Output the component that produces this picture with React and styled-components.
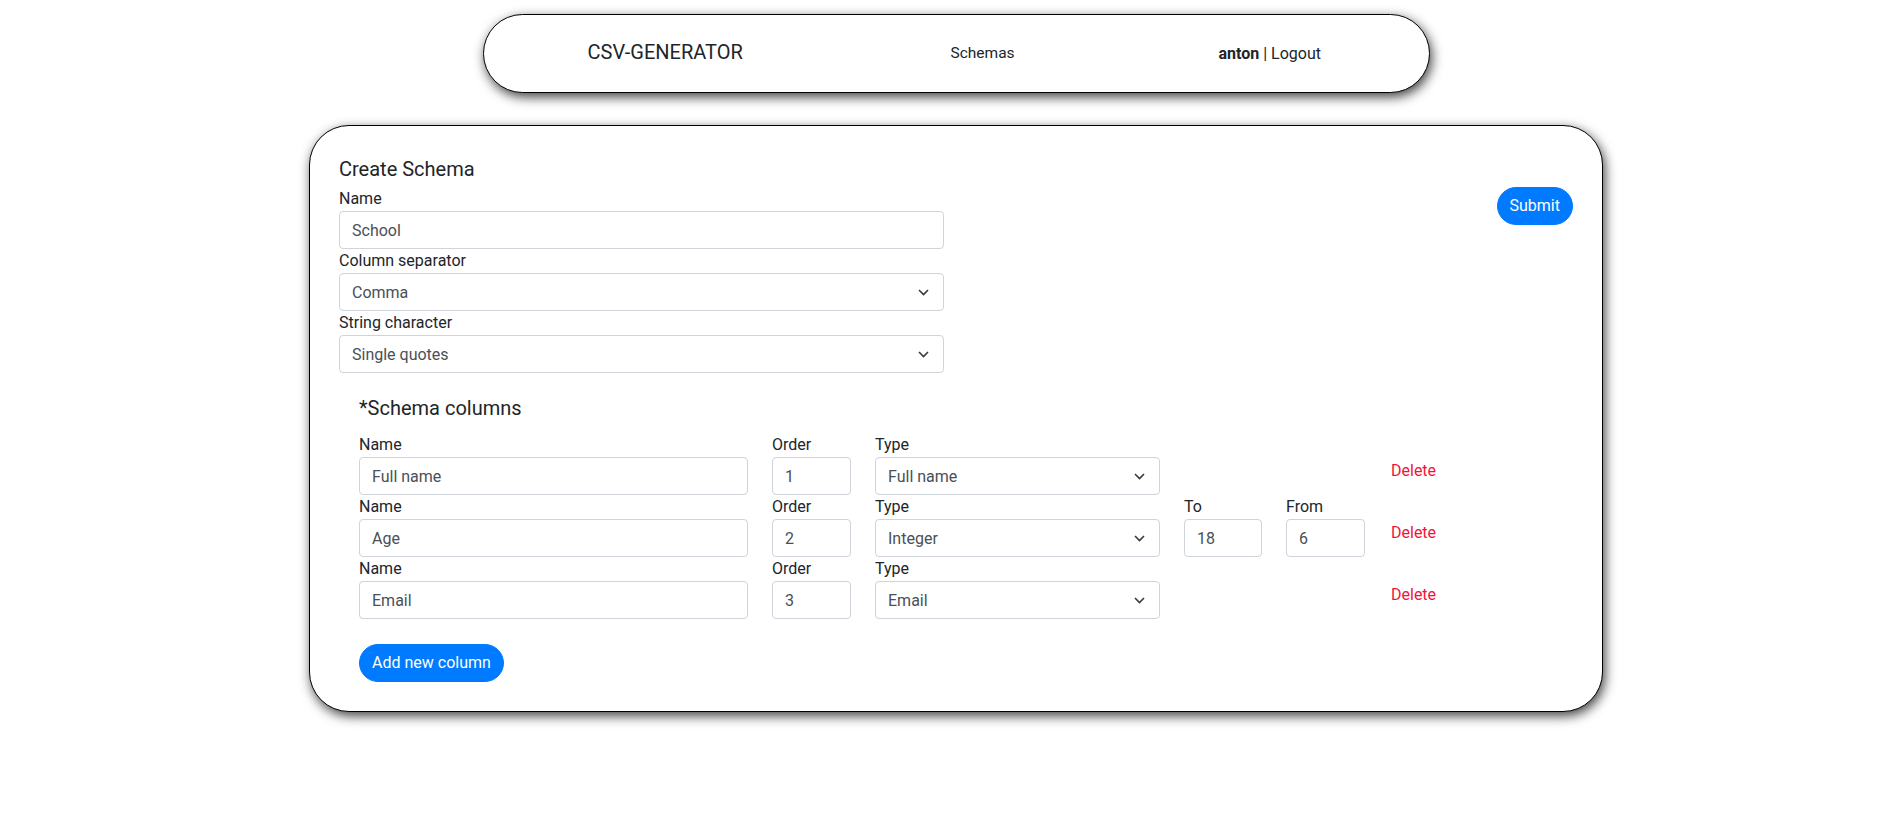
import React, { useState } from "react";
import styled, { createGlobalStyle } from "styled-components";

const GlobalStyle = createGlobalStyle`
  body {
    margin: 0;
    background: #fff;
    color: #212529;
    font-family: "Segoe UI", Roboto, "Liberation Sans", sans-serif;
    font-size: 16px;
    line-height: 1.5;
  }
  * { box-sizing: border-box; }
`;

const Page = styled.div`
  padding: 14px 0 40px 15px;
`;

const Header = styled.header`
  width: 947px;
  height: 79px;
  margin: 0 auto;
  border: 1px solid #000;
  border-radius: 40px;
  box-shadow: 2px 4px 12px rgba(0, 0, 0, 0.75);
  display: grid;
  grid-template-columns: 467px 268px 1fr;
  align-items: center;
  background: #fff;
`;

const Brand = styled.a`
  padding-left: 104px;
  font-size: 20px;
  color: #212529;
  text-decoration: none;
  margin-top: -3px;
`;

const NavLink = styled.a`
  font-size: 15.5px;
  color: #212529;
  text-decoration: none;
`;

const User = styled.div`
  font-size: 16px;
  color: #212529;
  b {
    font-weight: 700;
  }
`;

const Card = styled.main`
  width: 1294px;
  margin: 32px auto 0;
  border: 1px solid #000;
  border-radius: 40px;
  box-shadow: 2px 4px 12px rgba(0, 0, 0, 0.75);
  padding: 30px 29px 29px;
  background: #fff;
`;

const Title = styled.h5`
  margin: 1px 0 6px;
  font-size: 20px;
  font-weight: 400;
  line-height: 1.2;
`;

const TopRow = styled.div`
  display: flex;
  justify-content: space-between;
  align-items: flex-start;
`;

const Fields = styled.div`
  width: 605px;
  display: flex;
  flex-direction: column;
`;

const Label = styled.label`
  display: block;
  font-size: 16px;
  line-height: 24px;
  color: #212529;
`;

const Input = styled.input`
  display: block;
  width: 100%;
  height: 38px;
  padding: 6px 12px;
  font-family: inherit;
  font-size: 16px;
  color: #495057;
  background: #fff;
  border: 1px solid #ced4da;
  border-radius: 4px;
  outline: none;
`;

const SelectWrap = styled.div`
  position: relative;
  width: 100%;
`;

const Select = styled.select`
  display: block;
  width: 100%;
  height: 38px;
  padding: 6px 36px 6px 12px;
  font-family: inherit;
  font-size: 16px;
  color: #495057;
  background: #fff;
  border: 1px solid #ced4da;
  border-radius: 4px;
  appearance: none;
  outline: none;
`;

const Chevron = styled.svg`
  position: absolute;
  right: 15px;
  top: 16px;
  pointer-events: none;
`;

const PillButton = styled.button`
  height: 38px;
  padding: 6px 12px;
  font-family: inherit;
  font-size: 16px;
  line-height: 24px;
  color: #fff;
  background: #007bff;
  border: 1px solid #007bff;
  border-radius: 50rem;
  cursor: pointer;
`;

const ColumnsSection = styled.section`
  padding-left: 20px;
`;

const SectionTitle = styled.h5`
  margin: 23px 0 13px;
  font-size: 20px;
  font-weight: 400;
  line-height: 1.2;
`;

const ColumnRow = styled.div`
  display: grid;
  grid-template-columns: 389px 79px 285px 78px 79px auto;
  column-gap: 24px;
`;

const Cell = styled.div`
  display: flex;
  flex-direction: column;
`;

const DeleteCell = styled.div`
  grid-column: 6;
  display: flex;
  align-items: center;
  padding: 13px 0 0 2px;
`;

const DeleteLink = styled.a`
  color: #f0143c;
  font-size: 16px;
  cursor: pointer;
`;

const AddButton = styled(PillButton)`
  margin-top: 25px;
`;

const ChevronIcon = () => (
  <Chevron width="11" height="7" viewBox="0 0 11 7">
    <path d="M1 1l4.5 4.5L10 1" fill="none" stroke="#343a40" strokeWidth="1.6" />
  </Chevron>
);

const SelectField = ({ value, options }) => (
  <SelectWrap>
    <Select defaultValue={value}>
      {options.map((o) => (
        <option key={o}>{o}</option>
      ))}
    </Select>
    <ChevronIcon />
  </SelectWrap>
);

const types = ["Full name", "Integer", "Email", "Job", "Phone number", "Company", "Date"];

const initialColumns = [
  { name: "Full name", order: "1", type: "Full name" },
  { name: "Age", order: "2", type: "Integer", to: "18", from: "6" },
  { name: "Email", order: "3", type: "Email" },
];

const App = () => {
  const [columns] = useState(initialColumns);

  return (
    <Page>
      <GlobalStyle />
      <Header>
        <Brand href="#">CSV-GENERATOR</Brand>
        <NavLink href="#">Schemas</NavLink>
        <User>
          <b>anton</b> | Logout
        </User>
      </Header>

      <Card>
        <Title>Create Schema</Title>
        <TopRow>
          <Fields>
            <Label>Name</Label>
            <Input defaultValue="School" />
            <Label>Column separator</Label>
            <SelectField value="Comma" options={["Comma", "Semicolon", "Tab"]} />
            <Label>String character</Label>
            <SelectField value="Single quotes" options={["Single quotes", "Double quotes"]} />
          </Fields>
          <PillButton>Submit</PillButton>
        </TopRow>

        <ColumnsSection>
          <SectionTitle>*Schema columns</SectionTitle>
          {columns.map((c) => (
            <ColumnRow key={c.order}>
              <Cell>
                <Label>Name</Label>
                <Input defaultValue={c.name} />
              </Cell>
              <Cell>
                <Label>Order</Label>
                <Input defaultValue={c.order} />
              </Cell>
              <Cell>
                <Label>Type</Label>
                <SelectField value={c.type} options={types} />
              </Cell>
              {c.to && (
                <Cell>
                  <Label>To</Label>
                  <Input defaultValue={c.to} />
                </Cell>
              )}
              {c.from && (
                <Cell>
                  <Label>From</Label>
                  <Input defaultValue={c.from} />
                </Cell>
              )}
              <DeleteCell>
                <DeleteLink>Delete</DeleteLink>
              </DeleteCell>
            </ColumnRow>
          ))}
          <AddButton>Add new column</AddButton>
        </ColumnsSection>
      </Card>
    </Page>
  );
};

export default App;
